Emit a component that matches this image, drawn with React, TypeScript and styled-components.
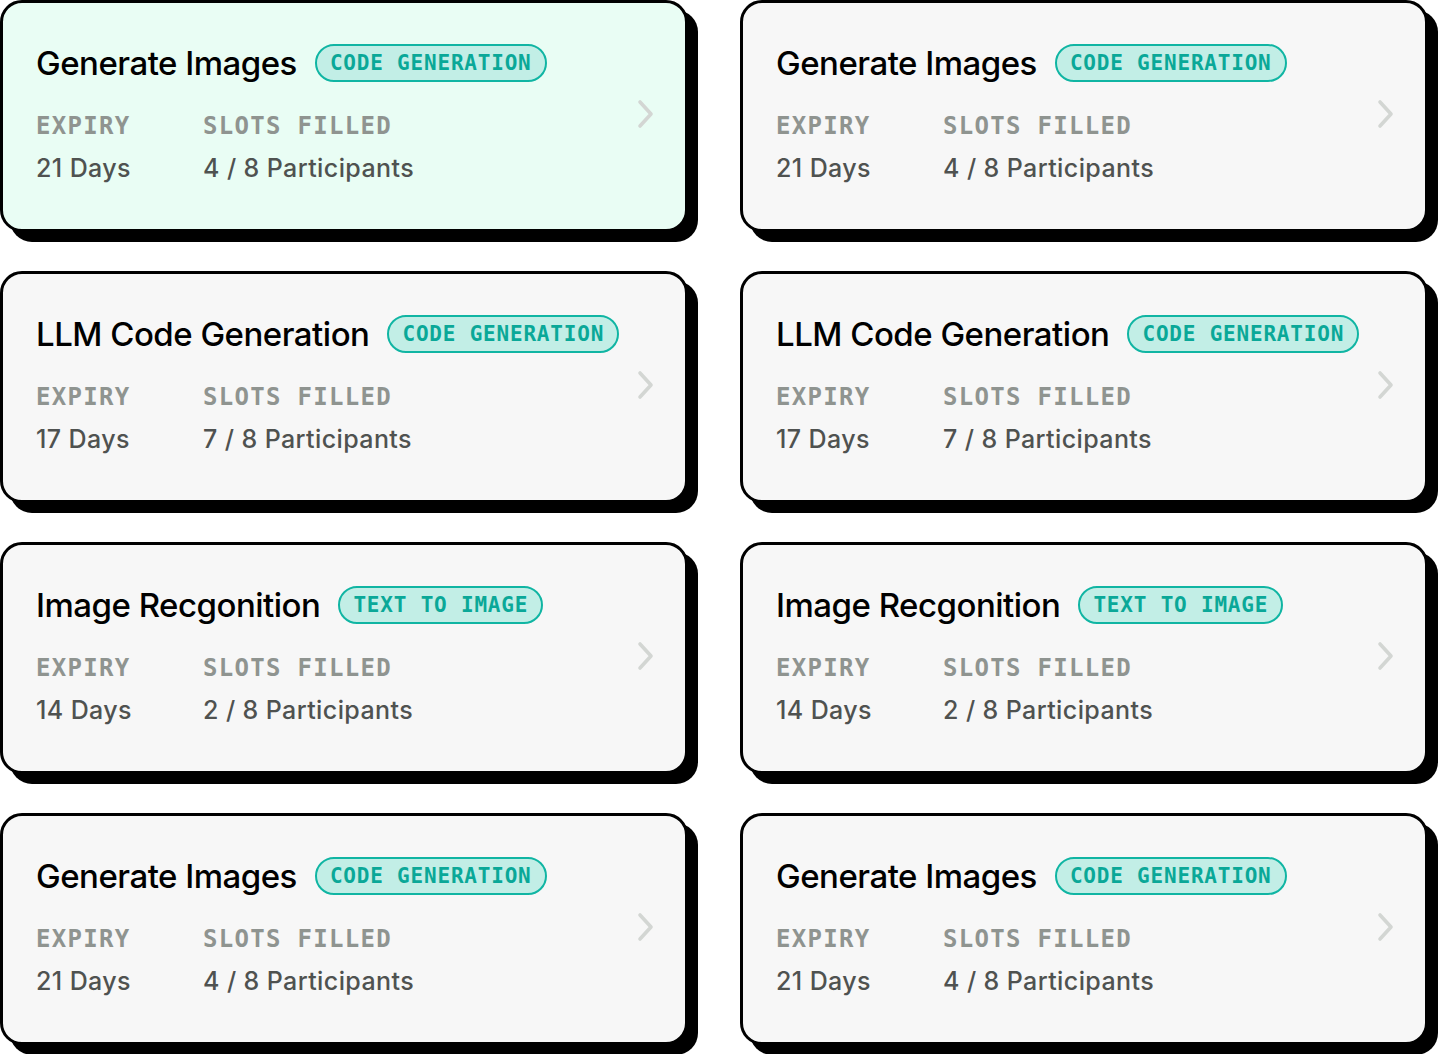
import React from "react";
import styled, { createGlobalStyle } from "styled-components";

const Global = createGlobalStyle`
  html, body { margin: 0; padding: 0; background: #ffffff; }
  body { font-family: Inter, "Noto Sans", sans-serif; }
`;

const Grid = styled.div`
  display: grid;
  grid-template-columns: 688px 688px;
  column-gap: 52px;
  row-gap: 29px;
  width: 1438px;
`;

const Card = styled.div<{ $active?: boolean }>`
  box-sizing: border-box;
  height: 232px;
  border: 3px solid #000;
  border-radius: 22px;
  background: ${(p) => (p.$active ? "#e9fdf4" : "#f7f7f7")};
  box-shadow: 10px 10px 0 #000;
  margin-bottom: 10px;
  display: flex;
  align-items: center;
  padding: 0 29px 0 33px;
`;

const Content = styled.div`
  flex: 1;
  display: flex;
  flex-direction: column;
`;

const Header = styled.div`
  display: flex;
  align-items: center;
  gap: 18px;
  height: 38px;
  margin-top: -4px;
`;

const Title = styled.h2`
  margin: 0;
  font-family: Inter, sans-serif;
  font-weight: 500;
  font-size: 33px;
  letter-spacing: -0.5px;
  color: #000;
  line-height: 38px;
`;

const Badge = styled.span`
  box-sizing: border-box;
  height: 38px;
  display: inline-flex;
  align-items: center;
  padding: 0 13px;
  border: 2px solid #10b5a3;
  border-radius: 19px;
  background: #c2eee6;
  color: #0aa898;
  font-family: "DejaVu Sans Mono", "Liberation Mono", monospace;
  font-weight: 700;
  font-size: 21px;
  letter-spacing: 0.8px;
`;

const Meta = styled.div`
  display: grid;
  grid-template-columns: 167px auto;
  margin-top: 27px;
  row-gap: 8px;
`;

const Label = styled.span`
  font-family: "DejaVu Sans Mono", "Liberation Mono", monospace;
  font-weight: 700;
  font-size: 24px;
  letter-spacing: 1.3px;
  color: #8f9490;
  line-height: 34px;
`;

const Value = styled.span`
  font-family: Inter, sans-serif;
  font-weight: 500;
  font-size: 25px;
  letter-spacing: 0.4px;
  color: #4f5250;
  line-height: 34px;
`;

const Chevron = styled.svg`
  width: 20px;
  height: 32px;
  flex: none;
  margin-top: -4px;
`;

type Item = { title: string; tag: string; days: number; slots: number };

const items: Item[] = [
  { title: "Generate Images", tag: "CODE GENERATION", days: 21, slots: 4 },
  { title: "Generate Images", tag: "CODE GENERATION", days: 21, slots: 4 },
  { title: "LLM Code Generation", tag: "CODE GENERATION", days: 17, slots: 7 },
  { title: "LLM Code Generation", tag: "CODE GENERATION", days: 17, slots: 7 },
  { title: "Image Recgonition", tag: "TEXT TO IMAGE", days: 14, slots: 2 },
  { title: "Image Recgonition", tag: "TEXT TO IMAGE", days: 14, slots: 2 },
  { title: "Generate Images", tag: "CODE GENERATION", days: 21, slots: 4 },
  { title: "Generate Images", tag: "CODE GENERATION", days: 21, slots: 4 },
];

export default function App() {
  return (
    <>
      <Global />
      <Grid>
        {items.map((it, i) => (
          <Card key={i} $active={i === 0}>
            <Content>
              <Header>
                <Title>{it.title}</Title>
                <Badge>{it.tag}</Badge>
              </Header>
              <Meta>
                <Label>EXPIRY</Label>
                <Label>SLOTS FILLED</Label>
                <Value>{it.days} Days</Value>
                <Value>{it.slots} / 8 Participants</Value>
              </Meta>
            </Content>
            <Chevron viewBox="0 0 20 32" fill="none">
              <path
                d="M4 4 L15 16 L4 28"
                stroke="#d3d6d3"
                strokeWidth="3.6"
                strokeLinecap="round"
                strokeLinejoin="round"
              />
            </Chevron>
          </Card>
        ))}
      </Grid>
    </>
  );
}
